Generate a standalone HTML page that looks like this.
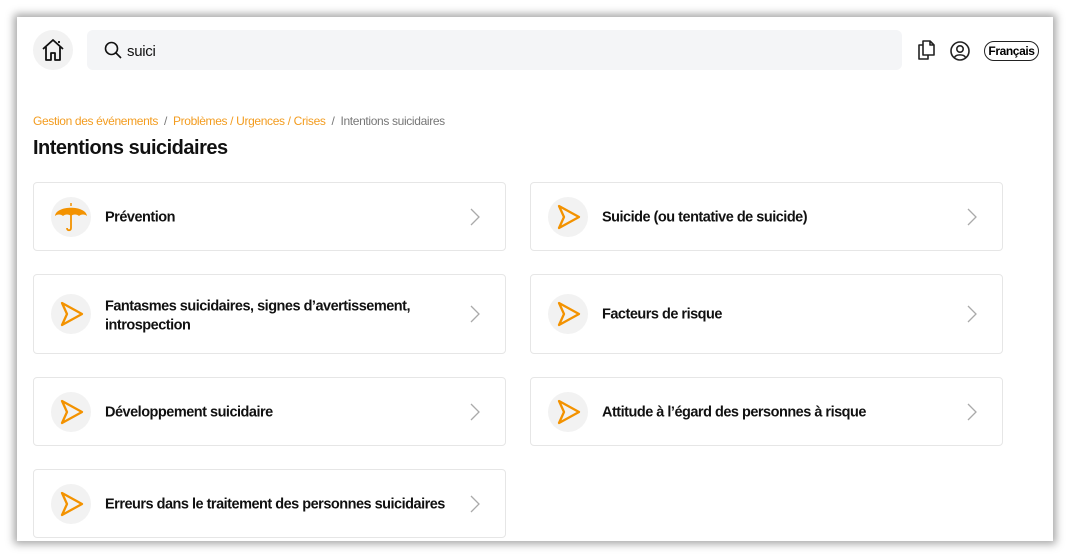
<!DOCTYPE html>
<html><head><meta charset="utf-8"><style>
*{box-sizing:border-box;margin:0;padding:0}
body{width:1070px;height:558px;background:#fff;font-family:"Liberation Sans",sans-serif;position:relative;overflow:hidden}
.win{position:absolute;left:17px;top:17px;width:1036px;height:524px;background:#fff;box-shadow:0 0 8px 3px rgba(0,0,0,.35)}
.abs{position:absolute}
.home{left:16px;top:13px;width:40px;height:40px;border-radius:50%;background:#f2f2f2}
.search{left:70px;top:13px;width:815px;height:40px;border-radius:6px;background:#f4f5f7}
.stext{left:110px;top:26px;font-size:15px;color:#111;letter-spacing:-.3px}
.lang{left:967px;top:24px;width:55px;height:20px;border:1px solid #222;border-radius:10px;font-size:12px;font-weight:bold;text-align:center;line-height:18px;letter-spacing:-.4px}
.bc{left:16px;top:97px;font-size:12px;color:#f39c1f;letter-spacing:-.35px}
.bc .g{color:#777}
.title{left:16px;top:120px;font-size:20px;font-weight:bold;color:#111;letter-spacing:-.5px}
.card{position:absolute;width:473px;border:1px solid #e6e6e6;border-radius:4px;background:#fff}
.ic{position:absolute;left:17px;width:40px;height:40px;border-radius:50%;background:#f2f2f2;top:50%;margin-top:-20px}
.ic svg{position:absolute;left:0;top:0}
.lb{position:absolute;left:71px;top:50%;transform:translateY(-44%);font-size:14.5px;font-weight:bold;color:#111;letter-spacing:-.5px;line-height:19px;width:330px}
.ch{position:absolute;left:436px;top:50%;margin-top:-9px}
</style></head><body>
<div class="win">
<div class="abs home"><svg width="40" height="40" viewBox="0 0 40 40"><path d="M10 19 L20 10 L30 19 M13 17 V30 H18 V23 H22 V30 H27 V17 M26 13 V11" fill="none" stroke="#111" stroke-width="1.8" stroke-linejoin="round"/></svg></div>
<div class="abs search"></div>
<svg class="abs" style="left:87px;top:24px" width="18" height="18" viewBox="0 0 18 18"><circle cx="7.5" cy="7.5" r="6" fill="none" stroke="#111" stroke-width="1.6"/><path d="M12 12 L17 17" stroke="#111" stroke-width="1.6"/></svg>
<div class="abs stext">suici</div>
<svg class="abs" style="left:899px;top:22px" width="20" height="22" viewBox="0 0 20 22"><path d="M7 2 H14 L18 6 V16 H7 Z M14 2 V6 H18" fill="none" stroke="#222" stroke-width="1.6" stroke-linejoin="round"/><path d="M7 6 H3 V20 H12 V16" fill="none" stroke="#222" stroke-width="1.6" stroke-linejoin="round"/></svg>
<svg class="abs" style="left:932px;top:23px" width="22" height="22" viewBox="0 0 22 22"><circle cx="11" cy="11" r="9" fill="none" stroke="#222" stroke-width="1.6"/><circle cx="11" cy="9" r="3.2" fill="none" stroke="#222" stroke-width="1.6"/><path d="M5.5 17.5 C7 14 15 14 16.5 17.5" fill="none" stroke="#222" stroke-width="1.6"/></svg>
<div class="abs lang">Français</div>
<div class="abs bc">Gestion des événements &nbsp;<span class="g">/</span>&nbsp; Problèmes / Urgences / Crises &nbsp;<span class="g">/&nbsp; Intentions suicidaires</span></div>
<div class="abs title">Intentions suicidaires</div>
</div>

<svg width="0" height="0" style="position:absolute"><defs>
<symbol id="arr" viewBox="0 0 40 40"><path d="M11 9 L31 20 L11 31 L16 20 Z" fill="none" stroke="#f39200" stroke-width="2.3" stroke-linejoin="round"/></symbol>
<symbol id="chev" viewBox="0 0 10 18"><path d="M1 1 L9 9 L1 17" fill="none" stroke="#aaa" stroke-width="1.3"/></symbol>
</defs></svg>

<div class="card" style="left:33px;top:182px;height:69px"><div class="ic"><svg width="40" height="40" viewBox="0 0 40 40"><path d="M4 19 C5 8 35 8 36 19 C34 17 30 17 28 19 C26 17 22 17 20 19 C18 17 14 17 12 19 C10 17 6 17 4 19 Z" fill="#f39200"/><path d="M20 6 V9" stroke="#f39200" stroke-width="1.5"/><path d="M20 17 V31 C20 34 16 34 16 31" fill="none" stroke="#f39200" stroke-width="1.8"/></svg></div><div class="lb">Prévention</div><svg class="ch" width="10" height="18"><use href="#chev"/></svg></div>
<div class="card" style="left:530px;top:182px;height:69px"><div class="ic"><svg width="40" height="40"><use href="#arr"/></svg></div><div class="lb">Suicide (ou tentative de suicide)</div><svg class="ch" width="10" height="18"><use href="#chev"/></svg></div>

<div class="card" style="left:33px;top:274px;height:80px"><div class="ic"><svg width="40" height="40"><use href="#arr"/></svg></div><div class="lb">Fantasmes suicidaires, signes d’avertissement, introspection</div><svg class="ch" width="10" height="18"><use href="#chev"/></svg></div>
<div class="card" style="left:530px;top:274px;height:80px"><div class="ic"><svg width="40" height="40"><use href="#arr"/></svg></div><div class="lb">Facteurs de risque</div><svg class="ch" width="10" height="18"><use href="#chev"/></svg></div>

<div class="card" style="left:33px;top:377px;height:69px"><div class="ic"><svg width="40" height="40"><use href="#arr"/></svg></div><div class="lb">Développement suicidaire</div><svg class="ch" width="10" height="18"><use href="#chev"/></svg></div>
<div class="card" style="left:530px;top:377px;height:69px"><div class="ic"><svg width="40" height="40"><use href="#arr"/></svg></div><div class="lb" style="width:360px">Attitude à l’égard des personnes à risque</div><svg class="ch" width="10" height="18"><use href="#chev"/></svg></div>

<div class="card" style="left:33px;top:469px;height:69px"><div class="ic"><svg width="40" height="40"><use href="#arr"/></svg></div><div class="lb" style="width:360px">Erreurs dans le traitement des personnes suicidaires</div><svg class="ch" width="10" height="18"><use href="#chev"/></svg></div>
</body></html>
